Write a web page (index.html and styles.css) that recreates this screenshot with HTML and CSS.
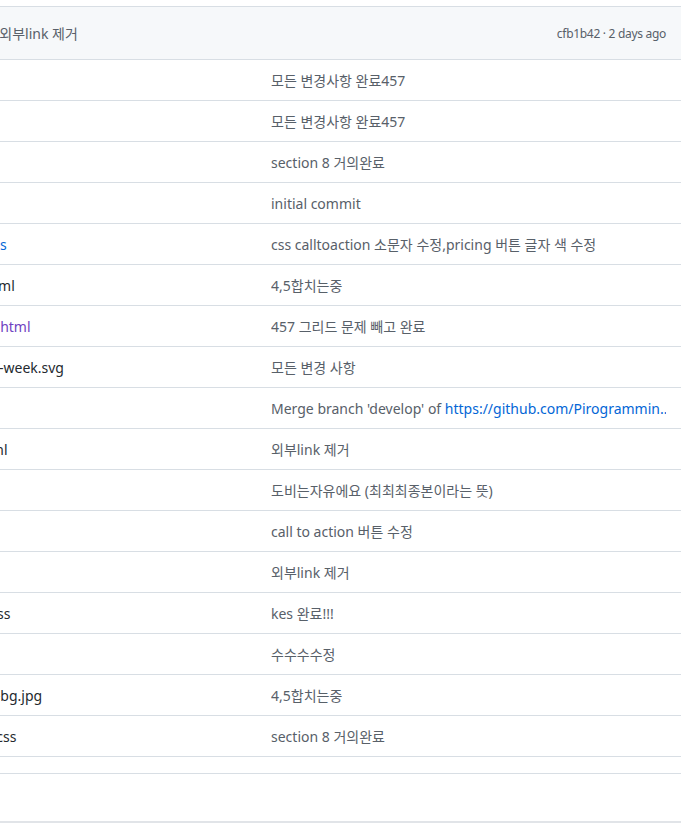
FILE: index.html
```html
<!DOCTYPE html>
<html>

<head>
    <meta http-equiv="content-type" content="text/html; charset=utf-8" />
    <title>Files</title>
    <link rel="stylesheet" href="styles.css">
</head>

<body>
    <div class="file-wrap">
        <div class="file-box">
            <!-- latest commit -->
            <div class="commit-tease">
                <div class="commit-left">
                    <span class="avatar"></span>
                    <a class="author" href="#">minji</a>
                    <span class="commit-msg">외부link 제거</span>
                </div>
                <div class="commit-meta">cfb1b42 · 2 days ago</div>
            </div>

            <div class="file-row"><span class="icon"></span><span class="name">.vscode</span><span class="msg">모든 변경사항 완료457</span></div>
            <div class="file-row"><span class="icon"></span><span class="name">css</span><span class="msg">모든 변경사항 완료457</span></div>
            <div class="file-row"><span class="icon"></span><span class="name">html</span><span class="msg">section 8 거의완료</span></div>
            <div class="file-row"><span class="icon"></span><span class="name">img</span><span class="msg">initial commit</span></div>
            <div class="file-row"><span class="icon"></span><span class="name link">global.css</span><span class="msg">css calltoaction 소문자 수정,pricing 버튼 글자 색 수정</span></div>
            <div class="file-row"><span class="icon"></span><span class="name">about.html</span><span class="msg">4,5합치는중</span></div>
            <div class="file-row"><span class="icon"></span><span class="name visited">features.html</span><span class="msg">457 그리드 문제 빼고 완료</span></div>
            <div class="file-row"><span class="icon"></span><span class="name">calendar-week.svg</span><span class="msg">모든 변경 사항</span></div>
            <div class="file-row"><span class="icon"></span><span class="name">fonts</span><span class="msg">Merge branch 'develop' of <a href="#">https://github.com/Pirogrammin…</a></span></div>
            <div class="file-row"><span class="icon"></span><span class="name">tests.html</span><span class="msg">외부link 제거</span></div>
            <div class="file-row"><span class="icon"></span><span class="name">js</span><span class="msg">도비는자유에요 (최최최종본이라는 뜻)</span></div>
            <div class="file-row"><span class="icon"></span><span class="name">main.js</span><span class="msg">call to action 버튼 수정</span></div>
            <div class="file-row"><span class="icon"></span><span class="name">nav.js</span><span class="msg">외부link 제거</span></div>
            <div class="file-row"><span class="icon"></span><span class="name">header.css</span><span class="msg">kes 완료!!!</span></div>
            <div class="file-row"><span class="icon"></span><span class="name">bg.png</span><span class="msg">수수수수정</span></div>
            <div class="file-row"><span class="icon"></span><span class="name">sections-bg.jpg</span><span class="msg">4,5합치는중</span></div>
            <div class="file-row"><span class="icon"></span><span class="name">content.css</span><span class="msg">section 8 거의완료</span></div>
            <div class="file-row empty"></div>
        </div>
        <div class="readme-box"></div>
    </div>
</body>

</html>
```

FILE: styles.css
```css
body {
    margin: 0;
    background: #fff;
    font-family: "Noto Sans", "Noto Sans CJK KR", sans-serif;
    font-size: 14px;
    color: #24292e;
}

.file-wrap {
    overflow: hidden;
    width: 681px;
    padding-top: 6px;
}

.file-box {
    width: 782px;
    margin-left: -100px;
    border-top: 1px solid #d8dee4;
}

.commit-tease {
    display: flex;
    align-items: center;
    justify-content: space-between;
    height: 52px;
    padding: 0 16px;
    background: #f6f8fa;
    border-bottom: 1px solid #d8dee4;
}

.commit-left {
    display: flex;
    align-items: center;
}

.avatar {
    width: 20px;
    height: 20px;
    border-radius: 3px;
    background: #c8d1da;
    margin-right: 8px;
}

.author {
    color: #24292e;
    font-weight: 600;
    text-decoration: none;
    margin-right: 21px;
}

.commit-msg {
    color: #586069;
}

.commit-meta {
    color: #586069;
    font-size: 12px;
    letter-spacing: -0.3px;
}

.file-row {
    display: grid;
    grid-template-columns: 16px 339px 1fr;
    align-items: center;
    height: 40px;
    padding: 0 16px;
    border-bottom: 1px solid #d8dee4;
    white-space: nowrap;
}

.file-row.empty {
    height: 16px;
}

.icon {
    width: 14px;
    height: 16px;
}

.name {
    padding-left: 10px;
    color: #24292e;
}

.name.link {
    color: #0366d6;
}

.name.visited {
    color: #6f42c1;
}

.msg {
    color: #586069;
    overflow: hidden;
}

.msg a {
    color: #0366d6;
    text-decoration: none;
}

.readme-box {
    margin-top: 47px;
    height: 2px;
    background: #e1e4e8;
}
```
